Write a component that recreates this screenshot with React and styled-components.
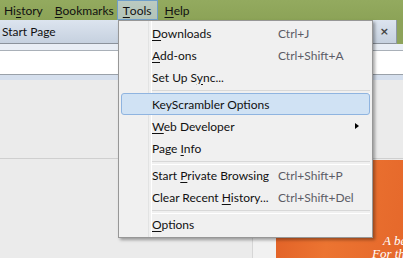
import React from 'react';
import styled, { createGlobalStyle } from 'styled-components';

const GlobalStyle = createGlobalStyle`
  html, body {
    margin: 0;
    padding: 0;
    width: 403px;
    height: 258px;
    overflow: hidden;
    background: #ebebeb;
  }
  * { box-sizing: border-box; }
`;

const UI_FONT = `"Lato", "Open Sans", sans-serif`;

const Window = styled.div`
  position: relative;
  width: 403px;
  height: 258px;
  display: flex;
  flex-direction: column;
  font-family: ${UI_FONT};
  font-size: 12px;
  color: #111;
  overflow: hidden;
`;

const MenuBar = styled.div`
  flex-shrink: 0;
  height: 20px;
  display: flex;
  align-items: stretch;
  background: linear-gradient(#93aa5f, #8ca357);
`;

const MenuBarItem = styled.div`
  display: flex;
  align-items: center;
  padding: 0 ${(p) => p.$right ?? 6}px 0 ${(p) => p.$left ?? 6}px;
  box-shadow: ${(p) => (p.$open ? 'inset 0 0 0 1px #6f9fc9' : 'none')};
  background: ${(p) => (p.$open ? 'linear-gradient(#bccbc2, #b2c3b6)' : 'transparent')};
  color: #111;
`;

const Key = styled.span`
  text-decoration: underline;
  text-underline-offset: 2px;
`;

const TabStrip = styled.div`
  flex-shrink: 0;
  height: 24px;
  display: flex;
  background: #8da35a;
`;

const Tab = styled.div`
  width: 397px;
  display: flex;
  align-items: center;
  justify-content: space-between;
  padding: 0 7px 0 2px;
  background: linear-gradient(#dce4ef, #c6d1df);
  border-right: 1px solid #8e98a4;
  border-bottom: 1px solid #8b929b;
`;

const Close = styled.span`
  font-family: "DejaVu Sans", sans-serif;
  font-size: 11px;
  font-weight: bold;
  color: #444;
`;

const NavBar = styled.div`
  flex-shrink: 0;
  height: 36px;
  display: flex;
  flex-direction: column;
  background: #e6ebf2;
`;

const NavTop = styled.div`
  height: 7px;
  background: #e9eef5;
  border-bottom: 1px solid #a9b0b8;
`;

const UrlBox = styled.div`
  height: 24px;
  background: #fff;
  border-bottom: 1px solid #9aa1a9;
`;

const NavBottom = styled.div`
  flex: 1;
  background: #d5dfed;
`;

const Content = styled.div`
  height: 178px;
  flex-shrink: 0;
  display: grid;
  grid-template-rows: 79px 99px;
  background: #ebebeb;
`;

const TopBand = styled.div`
  border-bottom: 1px solid #cfcfcf;
`;

const LowerRow = styled.div`
  display: grid;
  grid-template-columns: 253px 23px 1fr;
  overflow: hidden;
`;

const LeftPane = styled.div`
  border-right: 1px solid #d6d6d6;
`;

const Gutter = styled.div`
  background: #f1f1f1;
`;

const Promo = styled.div`
  margin-top: 1px;
  padding: 74px 0 0 96px;
  background-color: #e6662a;
  background-image: linear-gradient(100deg, #e05f26, #ec7431 45%, #e5682b);
  color: #fff;
  font-family: "Liberation Serif", serif;
  font-style: italic;
  font-size: 13px;
  line-height: 13px;
  white-space: nowrap;
  overflow: hidden;
`;

const PromoLine = styled.div`
  margin-left: ${(p) => p.$indent || 0}px;
`;

const Dropdown = styled.div`
  position: absolute;
  left: 118px;
  top: 20px;
  width: 255px;
  height: 218px;
  padding: 1px 2px 0 2px;
  background: #f0f0f0;
  border: 1px solid #979797;
  box-shadow: 2px 2px 3px rgba(0, 0, 0, 0.35);
  display: flex;
  flex-direction: column;
  &::before {
    content: '';
    position: absolute;
    left: 29px;
    top: 0;
    bottom: 0;
    width: 2px;
    border-left: 1px solid #e2e3e3;
    border-right: 1px solid #fff;
  }
`;

const Item = styled.div`
  position: relative;
  flex-shrink: 0;
  height: 22px;
  display: flex;
  align-items: center;
  padding-left: 30px;
  border: 1px solid ${(p) => (p.$hover ? '#8fb4e0' : 'transparent')};
  border-radius: 3px;
  background: ${(p) => (p.$hover ? '#d0e2f4' : 'transparent')};
`;

const Label = styled.span`
  width: 126px;
  white-space: nowrap;
`;

const Shortcut = styled.span`
  color: #5c5c66;
  white-space: nowrap;
`;

const Arrow = styled.span`
  position: absolute;
  right: 10px;
  top: 7px;
  width: 0;
  height: 0;
  border-top: 3.5px solid transparent;
  border-bottom: 3.5px solid transparent;
  border-left: 4px solid #000;
`;

const Separator = styled.div`
  flex-shrink: 0;
  height: 5px;
  margin-left: 30px;
  padding-top: 2px;
  &::after {
    content: '';
    display: block;
    height: 2px;
    border-top: 1px solid #d8d8d8;
    border-bottom: 1px solid #fff;
  }
`;

const u = (before, key, after) => (
  <>
    {before}
    <Key>{key}</Key>
    {after}
  </>
);

const App = () => {
  return (
    <Window>
      <GlobalStyle />
      <MenuBar>
        <MenuBarItem $left={4} $right={6}>{u('Hi', 's', 'tory')}</MenuBarItem>
        <MenuBarItem $left={6} $right={3}>{u('', 'B', 'ookmarks')}</MenuBarItem>
        <MenuBarItem $open $left={6} $right={6}>{u('', 'T', 'ools')}</MenuBarItem>
        <MenuBarItem $left={7} $right={6}>{u('', 'H', 'elp')}</MenuBarItem>
      </MenuBar>
      <TabStrip>
        <Tab>
          <span>Start Page</span>
          <Close>×</Close>
        </Tab>
      </TabStrip>
      <NavBar>
        <NavTop />
        <UrlBox />
        <NavBottom />
      </NavBar>
      <Content>
        <TopBand />
        <LowerRow>
          <LeftPane />
          <Gutter />
          <Promo>
            <PromoLine $indent={11}>A better web</PromoLine>
            <PromoLine>For the people</PromoLine>
          </Promo>
        </LowerRow>
      </Content>

      <Dropdown>
        <Item>
          <Label>{u('', 'D', 'ownloads')}</Label>
          <Shortcut>Ctrl+J</Shortcut>
        </Item>
        <Item>
          <Label>{u('', 'A', 'dd-ons')}</Label>
          <Shortcut>Ctrl+Shift+A</Shortcut>
        </Item>
        <Item>
          <Label>{u('Set Up S', 'y', 'nc...')}</Label>
        </Item>
        <Separator />
        <Item $hover>
          <Label>KeyScrambler Options</Label>
        </Item>
        <Item>
          <Label>{u('', 'W', 'eb Developer')}</Label>
          <Arrow />
        </Item>
        <Item>
          <Label>{u('Page ', 'I', 'nfo')}</Label>
        </Item>
        <Separator />
        <Item>
          <Label>{u('Start ', 'P', 'rivate Browsing')}</Label>
          <Shortcut>Ctrl+Shift+P</Shortcut>
        </Item>
        <Item>
          <Label>{u('Clear Recent ', 'H', 'istory...')}</Label>
          <Shortcut>Ctrl+Shift+Del</Shortcut>
        </Item>
        <Separator />
        <Item>
          <Label>{u('', 'O', 'ptions')}</Label>
        </Item>
      </Dropdown>
    </Window>
  );
};

export default App;
